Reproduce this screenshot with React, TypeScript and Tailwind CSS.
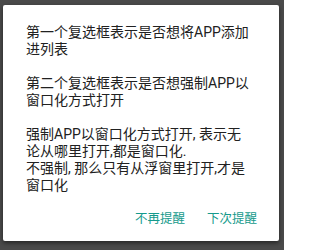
export default function App() {
  const font = { fontFamily: 'Roboto, "Noto Sans CJK SC", sans-serif' };
  return (
    <div className="w-[284px] h-[250px] bg-[#4a4a4a] pt-[5px] pl-[3px]" style={font}>
      <div className="w-[276px] h-[236px] bg-white rounded-[2px] shadow-[0_2px_4px_rgba(0,0,0,0.5)] flex flex-col">
        <div className="pt-[19px] pl-[23px] pr-[26px] text-[14px] leading-[17px] text-[#212121]">
          <p>第一个复选框表示是否想将APP添加进列表</p>
          <p className="mt-[17px]">第二个复选框表示是否想强制APP以窗口化方式打开</p>
          <p className="mt-[17px]">强制APP以窗口化方式打开, 表示无论从哪里打开,都是窗口化.</p>
          <p>不强制, 那么只有从浮窗里打开,才是窗口化</p>
        </div>
        <div className="mt-auto mb-[6px] h-[36px] flex justify-end items-center gap-[22px] pr-[22px] pt-[4px] text-[12.5px] text-[#159a8c]">
          <button>不再提醒</button>
          <button>下次提醒</button>
        </div>
      </div>
    </div>
  );
}
